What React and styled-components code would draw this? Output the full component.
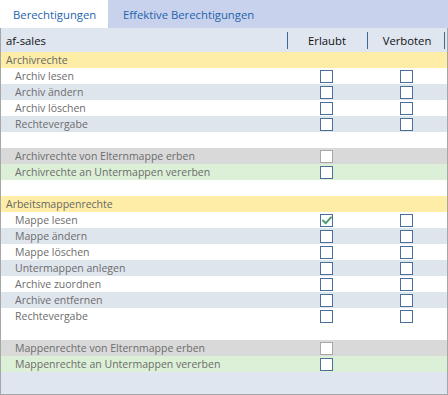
import styled, { createGlobalStyle } from 'styled-components';

const Global = createGlobalStyle`
  html, body { margin: 0; padding: 0; background: #ffffff; }
  body { font-family: "Open Sans", "Noto Sans", sans-serif; font-size: 11px; }
`;

const Page = styled.div`
  width: 448px;
  height: 395px;
  display: flex;
  flex-direction: column;
  background: #ffffff;
`;

const TabBar = styled.div`
  height: 28px;
  display: flex;
  background: #c9d2ec;
`;

const Tab = styled.div`
  display: flex;
  align-items: center;
  padding: 0 ${p => (p.active ? '12px' : '10px')} 0 ${p => (p.active ? '13px' : '15px')};
  background: ${p => (p.active ? '#ffffff' : 'transparent')};
  color: #1f63ad;
  font-size: 11.3px;
  width: ${p => (p.active ? '83px' : 'auto')};
`;

const Panel = styled.div`
  flex: 1;
  display: flex;
  flex-direction: column;
  border: 1px solid #a6a6a6;
  border-top: none;
  background: #dfe6f0;
`;

const Grid = styled.div`
  display: grid;
  grid-template-columns: 1fr 80px 80px;
  background: #ffffff;
`;

const HeadCell = styled.div`
  position: relative;
  height: 24px;
  display: flex;
  align-items: center;
  justify-content: ${p => (p.center ? 'center' : 'flex-start')};
  padding-left: ${p => (p.center ? '0' : '5px')};
  background: #dfe6f0;
  color: #111111;
  font-size: 11.3px;
  &::before {
    content: '';
    display: ${p => (p.center ? 'block' : 'none')};
    position: absolute;
    left: 0;
    top: 4px;
    bottom: 3px;
    width: 1px;
    background: #3a6a9a;
  }
  &::after {
    content: '';
    display: ${p => (p.last ? 'block' : 'none')};
    position: absolute;
    right: 2px;
    top: 4px;
    bottom: 3px;
    width: 1px;
    background: #3a6a9a;
  }
`;

const tones = {
  white: '#ffffff',
  blue: '#dfe5ed',
  section: '#fdeda7',
  grey: '#d9d9d9',
  green: '#dcefd7',
};

const Cell = styled.div`
  height: 16px;
  display: flex;
  align-items: center;
  justify-content: ${p => (p.center ? 'center' : 'flex-start')};
  padding-left: ${p => (p.center ? '0' : p.section ? '5px' : '14px')};
  background: ${p => tones[p.tone]};
  color: ${p => (p.section ? '#666666' : '#6c6c6c')};
  font-size: 10.5px;
  white-space: nowrap;
`;

const Box = styled.span`
  box-sizing: border-box;
  width: 13px;
  height: 13px;
  margin-right: 1px;
  border: 1.5px solid ${p => (p.disabled ? '#a8a8a8' : '#4b6f96')};
  background: #ffffff;
  display: flex;
  align-items: center;
  justify-content: center;
`;

function Check({ checked, disabled }) {
  return (
    <Box disabled={disabled}>
      {checked && (
        <svg width="10" height="9" viewBox="0 0 10 9">
          <path d="M1 4.6 L3.8 7.2 L9 1.4" fill="none" stroke="#4e9b6c" strokeWidth="2" strokeLinecap="round" strokeLinejoin="round" />
        </svg>
      )}
    </Box>
  );
}

const rows = [
  { label: 'Archivrechte', tone: 'section', section: true },
  { label: 'Archiv lesen', tone: 'white', a: true, v: true },
  { label: 'Archiv ändern', tone: 'blue', a: true, v: true },
  { label: 'Archiv löschen', tone: 'white', a: true, v: true },
  { label: 'Rechtevergabe', tone: 'blue', a: true, v: true },
  { label: '', tone: 'white' },
  { label: 'Archivrechte von Elternmappe erben', tone: 'grey', a: true, disabled: true },
  { label: 'Archivrechte an Untermappen vererben', tone: 'green', a: true },
  { label: '', tone: 'white' },
  { label: 'Arbeitsmappenrechte', tone: 'section', section: true },
  { label: 'Mappe lesen', tone: 'white', a: true, v: true, checked: true },
  { label: 'Mappe ändern', tone: 'blue', a: true, v: true },
  { label: 'Mappe löschen', tone: 'white', a: true, v: true },
  { label: 'Untermappen anlegen', tone: 'blue', a: true, v: true },
  { label: 'Archive zuordnen', tone: 'white', a: true, v: true },
  { label: 'Archive entfernen', tone: 'blue', a: true, v: true },
  { label: 'Rechtevergabe', tone: 'white', a: true, v: true },
  { label: '', tone: 'white' },
  { label: 'Mappenrechte von Elternmappe erben', tone: 'grey', a: true, disabled: true },
  { label: 'Mappenrechte an Untermappen vererben', tone: 'green', a: true },
];

export default function App() {
  return (
    <Page>
      <Global />
      <TabBar>
        <Tab active>Berechtigungen</Tab>
        <Tab>Effektive Berechtigungen</Tab>
      </TabBar>
      <Panel>
        <Grid>
          <HeadCell>af-sales</HeadCell>
          <HeadCell center>Erlaubt</HeadCell>
          <HeadCell center last>Verboten</HeadCell>
          {rows.map((r, i) => [
            <Cell key={i + 'l'} tone={r.tone} section={r.section}>{r.label}</Cell>,
            <Cell key={i + 'a'} tone={r.tone} center>
              {r.a && <Check checked={r.checked} disabled={r.disabled} />}
            </Cell>,
            <Cell key={i + 'v'} tone={r.tone} center>
              {r.v && <Check />}
            </Cell>,
          ])}
        </Grid>
      </Panel>
    </Page>
  );
}
